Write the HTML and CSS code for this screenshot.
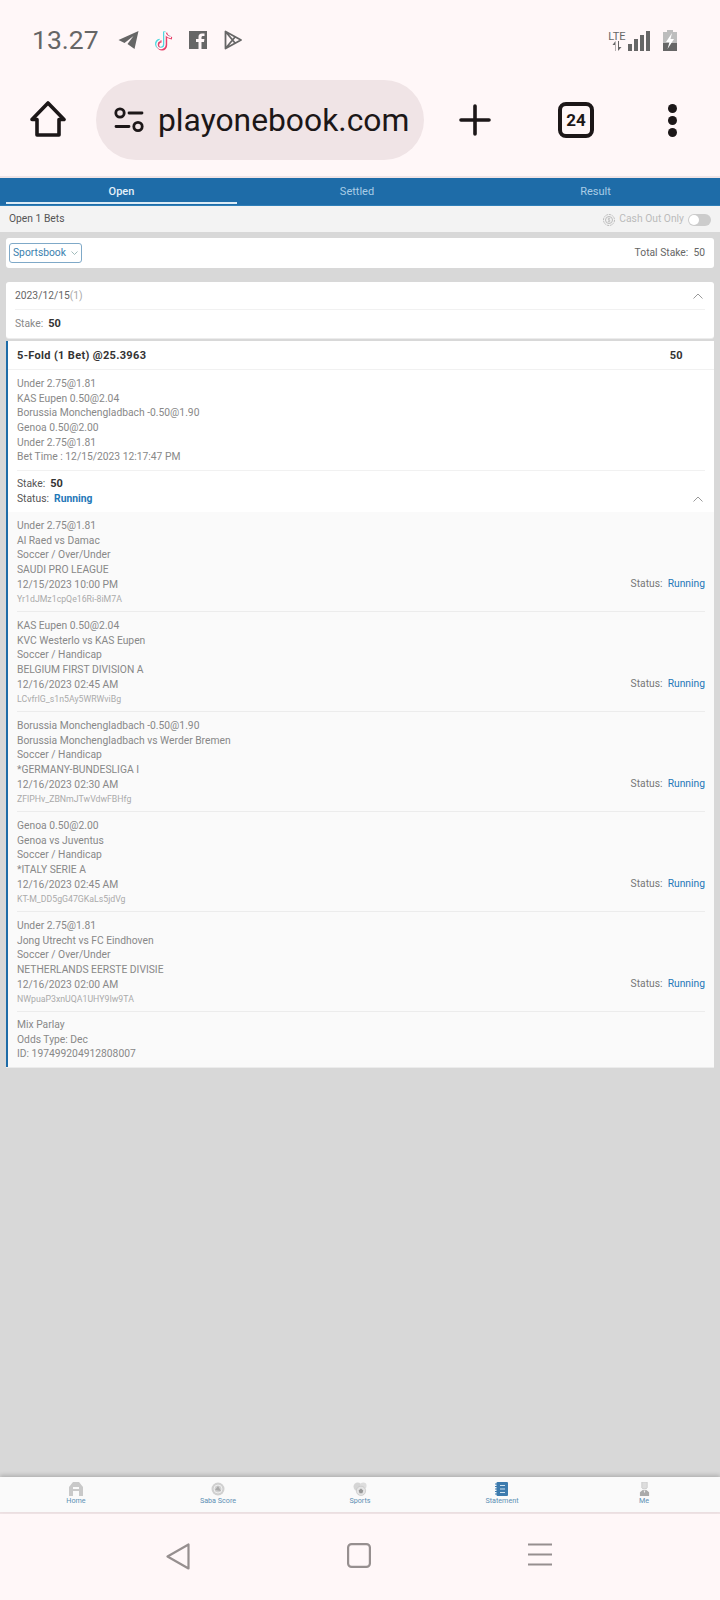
FILE: index.html
```html
<!DOCTYPE html>
<html lang="en">
<head>
    <meta charset="UTF-8" />
    <meta name="viewport" content="width=device-width, initial-scale=1.0"/>
    <title>playonebook.com - Statement</title>
    <link rel="stylesheet" href="styles.css">
</head>
<body>

    <div class="status-bar">
        <span class="time">13.27</span>
        <div class="app-icons">
            <svg width="21" height="18" viewBox="0 0 20 18"><path d="M20 0 L0 9 L6 12 L15 5 L9 13 L16 18 Z" fill="#666"/></svg>
            <svg width="20" height="22" viewBox="0 0 20 22" fill="none" stroke-width="2.4">
                <path d="M11 3 V15.5 A4 4 0 1 1 6.5 11.5 M11 3 C11.500 6 13.500 8 17 8.500" stroke="#4fd8de" transform="translate(-.8 -.6)"/>
                <path d="M11 3 V15.500 A4 4 0 1 1 6.500 11.500 M11 3 C11.500 6 13.500 8 17 8.500" stroke="#e8406a" transform="translate(1 .8)"/>
                <path d="M11 3 V15.500 A4 4 0 1 1 6.500 11.500 M11 3 C11.500 6 13.500 8 17 8.500" stroke="#fff" stroke-width="1.400"/>
            </svg>
            <svg width="18" height="18" viewBox="0 0 18 18"><path d="M0 0 H18 V18 H12.500 V11 H15 L15.400 8 H12.500 V6.500 C12.500 5.500 13 5 14 5 H15.500 V2.500 H13 C10.500 2.500 9.500 4 9.500 6 V8 H7 V11 H9.500 V18 H0 Z" fill="#666"/></svg>
            <svg width="18" height="20" viewBox="0 0 18 20" fill="none" stroke="#666" stroke-width="1.800" stroke-linejoin="round"><path d="M1.500 1.500 V18.500 L17 10 Z M1.500 1.500 L11 13 M1.500 18.500 L11 7"/></svg>
        </div>
        <div class="sys-icons">
            <div class="lte">
                <span>LTE</span>
                <svg width="10" height="10" viewBox="0 0 10 10" fill="#666"><path d="M3 10 V4 H0.500 L3.500 0 V10 Z M6 0 V10 L9.500 6 H7 V0 Z"/></svg>
            </div>
            <div class="signal">
                <i class="bar-1"></i><i class="bar-2"></i><i class="bar-3"></i><i class="bar-4"></i>
            </div>
            <svg class="battery" width="14" height="21" viewBox="0 0 14 21">
                <path d="M4 0 H10 V2 H14 V13 H0 V2 H4 Z" fill="#bdbdbd"/>
                <rect y="13" width="14" height="8" fill="#666"/>
                <path d="M9 3 L3 12 H6.500 L4.500 19 L11 9 H7.500 Z" fill="#fff"/>
            </svg>
        </div>
    </div>

    <div class="browser-bar">
        <svg class="home-btn" width="36" height="36" viewBox="0 0 36 36" fill="none" stroke="#1c1718" stroke-width="3.600" stroke-linejoin="round"><path d="M18 2 L34 18.500 H29 V34 H7 V18.500 H2 Z"/></svg>
        <div class="url-pill">
            <svg width="30" height="26" viewBox="0 0 30 26" fill="none" stroke="#1c1718" stroke-width="2.800" stroke-linecap="round">
                <circle cx="6" cy="6" r="4.200"/><path d="M15 6 H28 M2 19.500 H15"/><circle cx="24" cy="19.500" r="4.200"/>
            </svg>
            <span class="url">playonebook.com</span>
        </div>
        <svg class="plus-btn" width="32" height="32" viewBox="0 0 32 32" stroke="#1c1718" stroke-width="3.600" stroke-linecap="round"><path d="M16 2 V30 M2 16 H30"/></svg>
        <div class="tab-count">24</div>
        <div class="menu-dots"><i></i><i></i><i></i></div>
    </div>

    <main class="page">
        <div class="tabs">
            <div class="tab active">Open</div>
            <div class="tab">Settled</div>
            <div class="tab">Result</div>
        </div>

        <div class="open-row">
            <span>Open 1 Bets</span>
            <div class="cash-out">
                <svg width="12" height="12" viewBox="0 0 12 12" fill="none" stroke="#bbb"><circle cx="6" cy="6" r="5.500" stroke-dasharray="2 .8"/><circle cx="6" cy="6" r="3.500"/><path d="M7.200 4.500 H5.300 V6 H6.800 V7.500 H4.800 M6 3.500 V8.500" stroke-width=".7"/></svg>
                <span>Cash Out Only</span>
                <div class="toggle"></div>
            </div>
        </div>

        <div class="filter-card">
            <div class="select">Sportsbook <svg width="7" height="4" viewBox="0 0 7 4" fill="none" stroke="#8aa"><path d="M.5 .5 L3.500 3.500 L6.500 .5" stroke-width=".8"/></svg></div>
            <span>Total Stake:&nbsp; 50</span>
        </div>

        <div class="date-card">
            <div class="date-row">
                <span>2023/12/15<em>(1)</em></span>
                <svg class="chevron" width="10" height="6" viewBox="0 0 10 6" fill="none" stroke="#999"><path d="M.5 5.500 L5 1 L9.500 5.500"/></svg>
            </div>
            <div class="stake-row"><span class="label">Stake:</span> <b>50</b></div>
        </div>

        <div class="bet-card">
            <div class="bet-head">
                <b>5-Fold (1 Bet) @25.3963</b>
                <b class="bet-amount">50</b>
            </div>
            <div class="bet-picks">
                <div>Under 2.75@1.81</div>
                <div>KAS Eupen 0.50@2.04</div>
                <div>Borussia Monchengladbach -0.50@1.90</div>
                <div>Genoa 0.50@2.00</div>
                <div>Under 2.75@1.81</div>
                <div>Bet Time : 12/15/2023 12:17:47 PM</div>
            </div>
            <div class="bet-stake">
                <div class="dark">Stake:&nbsp; <b>50</b></div>
                <div class="status-line">
                    <div class="dark">Status:&nbsp; <b class="running">Running</b></div>
                    <svg class="chevron" width="10" height="6" viewBox="0 0 10 6" fill="none" stroke="#999"><path d="M.5 5.500 L5 1 L9.500 5.500"/></svg>
                </div>
            </div>

            <div class="legs">
                <div class="leg">
                    <div>
                        <div>Under 2.75@1.81</div>
                        <div>Al Raed vs Damac</div>
                        <div>Soccer / Over/Under</div>
                        <div>SAUDI PRO LEAGUE</div>
                        <div>12/15/2023 10:00 PM</div>
                        <div class="ref">Yr1dJMz1cpQe16Ri-8iM7A</div>
                    </div>
                    <div class="leg-status">Status:&nbsp; <span class="running">Running</span></div>
                </div>
                <div class="leg">
                    <div>
                        <div>KAS Eupen 0.50@2.04</div>
                        <div>KVC Westerlo vs KAS Eupen</div>
                        <div>Soccer / Handicap</div>
                        <div>BELGIUM FIRST DIVISION A</div>
                        <div>12/16/2023 02:45 AM</div>
                        <div class="ref">LCvfrIG_s1n5Ay5WRWviBg</div>
                    </div>
                    <div class="leg-status">Status:&nbsp; <span class="running">Running</span></div>
                </div>
                <div class="leg">
                    <div>
                        <div>Borussia Monchengladbach -0.50@1.90</div>
                        <div>Borussia Monchengladbach vs Werder Bremen</div>
                        <div>Soccer / Handicap</div>
                        <div>*GERMANY-BUNDESLIGA I</div>
                        <div>12/16/2023 02:30 AM</div>
                        <div class="ref">ZFlPHv_ZBNmJTwVdwFBHfg</div>
                    </div>
                    <div class="leg-status">Status:&nbsp; <span class="running">Running</span></div>
                </div>
                <div class="leg">
                    <div>
                        <div>Genoa 0.50@2.00</div>
                        <div>Genoa vs Juventus</div>
                        <div>Soccer / Handicap</div>
                        <div>*ITALY SERIE A</div>
                        <div>12/16/2023 02:45 AM</div>
                        <div class="ref">KT-M_DD5gG47GKaLs5jdVg</div>
                    </div>
                    <div class="leg-status">Status:&nbsp; <span class="running">Running</span></div>
                </div>
                <div class="leg">
                    <div>
                        <div>Under 2.75@1.81</div>
                        <div>Jong Utrecht vs FC Eindhoven</div>
                        <div>Soccer / Over/Under</div>
                        <div>NETHERLANDS EERSTE DIVISIE</div>
                        <div>12/16/2023 02:00 AM</div>
                        <div class="ref">NWpuaP3xnUQA1UHY9Iw9TA</div>
                    </div>
                    <div class="leg-status">Status:&nbsp; <span class="running">Running</span></div>
                </div>
                <div class="bet-foot">
                    <div>Mix Parlay</div>
                    <div>Odds Type: Dec</div>
                    <div>ID: 197499204912808007</div>
                </div>
            </div>
        </div>
    </main>

    <nav class="bottom-nav">
        <div class="nav-item">
            <svg width="14" height="14" viewBox="0 0 14 14"><path d="M0 14 V5 L4 0 H10 L14 5 V14 H10 V9 H4 V14 Z M4 5 V7 H10 V5 Z" fill="#c9c9c9" fill-rule="evenodd"/></svg>
            <span>Home</span>
        </div>
        <div class="nav-item">
            <svg width="14" height="14" viewBox="0 0 14 14"><circle cx="7" cy="7" r="6.500" fill="#d0d0d0"/><circle cx="7" cy="7" r="4" fill="none" stroke="#eee"/><path d="M4 8 L7 4 L10 9 Z" fill="#aaa"/></svg>
            <span>Saba Score</span>
        </div>
        <div class="nav-item">
            <svg width="15" height="14" viewBox="0 0 16 15"><circle cx="5" cy="5" r="4.500" fill="#d5d5d5"/><circle cx="11" cy="4" r="3.500" fill="#ddd"/><circle cx="8.500" cy="9.500" r="5" fill="#e4e4e4" stroke="#bbb" stroke-width=".6"/><path d="M8.500 7 L11 9 L10 12 H7 L6 9 Z" fill="#999"/></svg>
            <span>Sports</span>
        </div>
        <div class="nav-item">
            <svg width="14" height="14" viewBox="0 0 14 14"><rect x="1.500" width="11.500" height="14" rx="1" fill="#3d7bae"/><path d="M0 2 H2 M0 4.500 H2 M0 7 H2 M0 9.500 H2 M0 12 H2" stroke="#3d7bae"/><path d="M5 3.500 H10 M5 7 H10 M5 10.500 H10" stroke="#cfe2f0"/></svg>
            <span>Statement</span>
        </div>
        <div class="nav-item">
            <svg width="11" height="14" viewBox="0 0 12 15"><path d="M3 0 H9 V6 C9 8 3 8 3 6 Z" fill="#ddd" stroke="#bbb" stroke-width=".6"/><path d="M1 15 V11 L4 8.500 H8 L11 11 V15 Z" fill="#aaa"/><path d="M5 9 L6 12 L7 9 Z" fill="#eee"/></svg>
            <span>Me</span>
        </div>
    </nav>

    <div class="android-nav">
        <svg width="24" height="27" viewBox="0 0 24 27" fill="none" stroke="#968f8f" stroke-width="2.200" stroke-linejoin="round"><path d="M22.500 1.500 V25.500 L1.500 13.500 Z"/></svg>
        <svg width="24" height="25" viewBox="0 0 24 25" fill="none" stroke="#968f8f" stroke-width="2.200"><rect x="1.100" y="1.100" width="21.800" height="22.800" rx="3.500"/></svg>
        <svg width="24" height="23" viewBox="0 0 24 23" stroke="#968f8f" stroke-width="2.200"><path d="M0 1.500 H24 M0 11.500 H24 M0 21.500 H24"/></svg>
    </div>

</body>
</html>
```

FILE: styles.css
```css
* {
    margin: 0;
    padding: 0;
    box-sizing: border-box;
}

body {
    width: 720px;
    height: 1600px;
    display: flex;
    flex-direction: column;
    font-family: Roboto, 'Noto Sans', sans-serif;
    font-size: 10.3px;
    line-height: 14.65px;
    color: #888;
    background-color: #fff7f8;
    overflow: hidden;
}

/* phone status bar */
.status-bar {
    height: 80px;
    display: flex;
    align-items: center;
    padding: 0 43px 0 32px;
}

.time {
    font-size: 26.500px;
    line-height: 30px;
    color: #666;
}

.app-icons {
    display: flex;
    align-items: center;
    gap: 15px;
    margin-left: 19px;
}

.app-icons svg:last-child {
    margin-left: 2px;
}

.sys-icons {
    display: flex;
    align-items: flex-end;
    margin-left: auto;
}

.lte {
    width: 18px;
    display: flex;
    flex-direction: column;
    align-items: center;
    color: #666;
}

.lte span {
    font-size: 11px;
    line-height: 9px;
}

.signal {
    display: flex;
    align-items: flex-end;
    gap: 2px;
    margin-left: 2px;
}

.signal i {
    display: block;
    width: 4px;
    background-color: #666;
}

.bar-1 { height: 7px; }
.bar-2 { height: 12px; }
.bar-3 { height: 16px; }
.bar-4 { height: 20px; }

.battery {
    margin-left: 13px;
}

/* browser toolbar */
.browser-bar {
    height: 98px;
    display: flex;
    align-items: flex-start;
    padding-left: 30px;
    border-bottom: 2px solid #f0e4e6;
    color: #1c1718;
}

.home-btn {
    margin: 21px 30px 0 0;
}

.url-pill {
    width: 328px;
    height: 80px;
    display: flex;
    align-items: center;
    gap: 14px;
    padding-left: 18px;
    border-radius: 40px;
    background-color: #f0e4e6;
}

.url {
    font-size: 31.800px;
    line-height: 40px;
    white-space: nowrap;
}

.plus-btn {
    margin: 24px 0 0 35px;
}

.tab-count {
    width: 36px;
    height: 36px;
    display: flex;
    justify-content: center;
    align-items: center;
    margin: 22px 0 0 67px;
    border: 4px solid #1c1718;
    border-radius: 8px;
    font-size: 17px;
    font-weight: bold;
}

.menu-dots {
    display: flex;
    flex-direction: column;
    gap: 3px;
    margin: 24px 0 0 74px;
}

.menu-dots i {
    display: block;
    width: 9px;
    height: 9px;
    border-radius: 50%;
    background-color: #1c1718;
}

/* betting page */
.page {
    flex: 1;
    background-color: #d8d8d8;
}

.tabs {
    height: 28px;
    display: grid;
    grid-template-columns: 231px 240px 1fr;
    padding: 0 6px;
    background-color: #1e6ca8;
    border-bottom: 1px solid #2f7fb8;
}

.tab {
    text-align: center;
    font-size: 11px;
    line-height: 27px;
    color: #a9cde6;
}

.tab.active {
    height: 26px;
    color: #e4f1fa;
    font-weight: 500;
    border-bottom: 2px solid #dcebf5;
}

.open-row {
    height: 26px;
    display: flex;
    justify-content: space-between;
    align-items: center;
    padding: 1px 9px 0;
    background-color: #f3f3f3;
    color: #555;
}

.cash-out {
    display: flex;
    align-items: center;
    gap: 4px;
    color: #bbb;
}

.toggle {
    position: relative;
    width: 23px;
    height: 12px;
    border-radius: 6px;
    background-color: #ccc;
}

.toggle::before {
    content: "";
    position: absolute;
    left: 1px;
    top: 1px;
    width: 10px;
    height: 10px;
    border-radius: 50%;
    background-color: #fff;
}

.filter-card {
    height: 30px;
    display: flex;
    justify-content: space-between;
    align-items: center;
    margin: 6px 6px 14px;
    padding: 0 9px 0 3px;
    border-radius: 3px;
    background-color: #fff;
    color: #666;
}

.select {
    height: 20px;
    display: flex;
    align-items: center;
    gap: 5px;
    padding: 0 3px;
    border: 1px solid #7fa9c8;
    border-radius: 3px;
    color: #3b7fae;
}

.date-card {
    height: 56px;
    margin: 0 6px 3px;
    padding: 0 9px;
    border-radius: 3px;
    background-color: #fff;
    box-shadow: 0 1px 0 #ececec;
}

.date-row {
    height: 28px;
    display: flex;
    justify-content: space-between;
    align-items: center;
    padding-top: 1px;
    border-bottom: 1px solid #f1f1f1;
    color: #666;
}

.date-row em {
    font-style: normal;
    color: #aaa;
}

.chevron {
    margin-right: 2px;
}

.stake-row {
    height: 28px;
    display: flex;
    align-items: center;
    gap: 5px;
    padding-top: 1px;
}

.stake-row b,
.bet-stake b:not(.running) {
    font-size: 11px;
    color: #333;
}

.bet-card {
    margin: 0 6px;
    border-left: 2px solid #1e6ca8;
    background-color: #fff;
    box-shadow: 0 1px 0 #ececec;
}

.bet-head {
    height: 29px;
    display: flex;
    justify-content: space-between;
    align-items: center;
    padding: 2px 31px 0 9px;
    border-bottom: 1px solid #f1f1f1;
    font-size: 11px;
    letter-spacing: .33px;
    color: #333;
}

.bet-picks {
    margin: 0 9px;
    padding: 7px 0 5px;
    border-bottom: 1px solid #f1f1f1;
}

.bet-stake {
    height: 41px;
    padding: 6px 9px 0;
}

.dark {
    color: #555;
}

.status-line {
    display: flex;
    justify-content: space-between;
    align-items: center;
}

.running {
    color: #1f78b8;
}

.legs {
    background-color: #fafafa;
}

.leg {
    height: 100px;
    display: flex;
    justify-content: space-between;
    align-items: flex-end;
    margin: 0 9px;
    padding: 6px 0 4px;
    border-bottom: 1px solid #ececec;
}

.ref {
    font-size: 8.750px;
    color: #aaa;
}

.leg-status {
    margin-bottom: 15px;
    color: #777;
}

.bet-foot {
    padding: 6px 9px 5px;
}

/* bottom app nav */
.bottom-nav {
    height: 35px;
    display: grid;
    grid-template-columns: repeat(5, 1fr);
    padding: 0 5px;
    background-color: #fafafa;
    box-shadow: 0 -2px 4px rgba(0, 0, 0, 0.18);
    position: relative;
}

.nav-item {
    display: flex;
    flex-direction: column;
    align-items: center;
    padding-top: 5px;
    font-size: 7.200px;
    line-height: 10px;
    color: #5d90b4;
}

/* android navigation */
.android-nav {
    height: 88px;
    display: flex;
    gap: 157px;
    padding: 29px 0 0 166px;
    align-items: flex-start;
    border-top: 2px solid #f0e4e6;
}
```
